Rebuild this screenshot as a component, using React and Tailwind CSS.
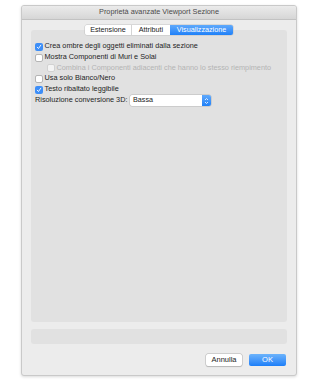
import React from "react";

function Check({ checked, disabled }) {
  if (checked) {
    return (
      <span className="w-[8px] h-[8px] rounded-[2px] bg-[#3d8ef7] flex items-center justify-center shrink-0">
        <svg width="6" height="6" viewBox="0 0 6 6">
          <path d="M1.2 3.2 L2.5 4.5 L4.8 1.2" stroke="white" strokeWidth="0.9" fill="none" strokeLinecap="round" strokeLinejoin="round" />
        </svg>
      </span>
    );
  }
  return (
    <span
      className={
        "w-[8px] h-[8px] rounded-[2px] shrink-0 border " +
        (disabled ? "bg-[#f4f4f4] border-[#d2d2d2]" : "bg-white border-[#b5b5b5]")
      }
    />
  );
}

function Row({ checked, disabled, indent, children }) {
  return (
    <div className={"flex items-center gap-[1.5px] h-[10.7px] whitespace-nowrap " + (indent ? "pl-[12px]" : "")}>
      <Check checked={checked} disabled={disabled} />
      <span className={disabled ? "text-[#b4b4b4]" : "text-[#1e1e1e]"}>{children}</span>
    </div>
  );
}

export default function App() {
  return (
    <div className="w-full h-[388px] bg-white pt-[5px] pl-[21px]" style={{ fontFamily: '"Liberation Sans", Arial, sans-serif' }}>
      <div className="w-[276px] h-[371px] rounded-[3px] border border-[#c9c9c9] shadow-[0_1px_3px_rgba(0,0,0,0.15)] bg-[#ececec] flex flex-col overflow-hidden">
        <div className="h-[14px] bg-gradient-to-b from-[#ebebeb] to-[#d6d6d6] border-b border-[#c2c2c2] flex items-center justify-center text-[7.3px] text-[#4a4a4a] whitespace-nowrap">
          Proprietà avanzate Viewport Sezione
        </div>

        <div className="flex-1 flex flex-col px-[9px] pt-[5px]">
          <div className="relative z-10 flex justify-center">
            <div className="flex h-[10px] text-[7.2px] rounded-[2px] shadow-[0_0_0_0.5px_#c4c4c4] overflow-hidden whitespace-nowrap">
              <div className="w-[47px] bg-white text-[#222] flex items-center justify-center border-r border-[#d4d4d4]">Estensione</div>
              <div className="w-[38px] bg-white text-[#222] flex items-center justify-center">Attributi</div>
              <div className="w-[63px] bg-gradient-to-b from-[#5fa9fb] to-[#1c80f8] text-white flex items-center justify-center">Visualizzazione</div>
            </div>
          </div>

          <div className="-mt-[5px] h-[292px] rounded-[3px] bg-[#e1e1e1] pt-[11.5px] pl-[4px] text-[7.3px] flex flex-col">
            <Row checked>Crea ombre degli oggetti eliminati dalla sezione</Row>
            <Row>Mostra Componenti di Muri e Solai</Row>
            <Row indent disabled>Combina i Componenti adiacenti che hanno lo stesso riempimento</Row>
            <Row>Usa solo Bianco/Nero</Row>
            <Row checked>Testo ribaltato leggibile</Row>
            <div className="flex items-center h-[10.7px] mt-[0.3px] whitespace-nowrap">
              <span className="w-[95px] text-[#1e1e1e]">Risoluzione conversione 3D:</span>
              <div className="w-[81px] h-[10.5px] bg-white rounded-[2px] shadow-[0_0_0_0.5px_#b8b8b8] flex items-center overflow-hidden">
                <span className="flex-1 pl-[3px] text-[7.2px] text-[#222]">Bassa</span>
                <span className="w-[9px] h-full bg-gradient-to-b from-[#5fa9fb] to-[#1c80f8] flex items-center justify-center">
                  <svg width="5" height="8" viewBox="0 0 5 8">
                    <path d="M1 3 L2.5 1.5 L4 3 M1 5 L2.5 6.5 L4 5" stroke="white" strokeWidth="0.8" fill="none" />
                  </svg>
                </span>
              </div>
            </div>
          </div>

          <div className="mt-[7px] h-[15px] rounded-[3px] bg-[#e1e1e1]" />

          <div className="mt-[10px] flex justify-end gap-[7px] pr-[1px]">
            <div className="w-[36px] h-[12px] bg-white rounded-[2px] shadow-[0_0_0_0.5px_#b5b5b5,0_0.5px_1px_rgba(0,0,0,0.2)] flex items-center justify-center text-[7.5px] text-[#222]">
              Annulla
            </div>
            <div className="w-[37px] h-[12px] rounded-[2px] bg-gradient-to-b from-[#6cb3fb] to-[#1a7ef8] flex items-center justify-center text-[7.5px] text-white">
              OK
            </div>
          </div>
        </div>
      </div>
    </div>
  );
}
